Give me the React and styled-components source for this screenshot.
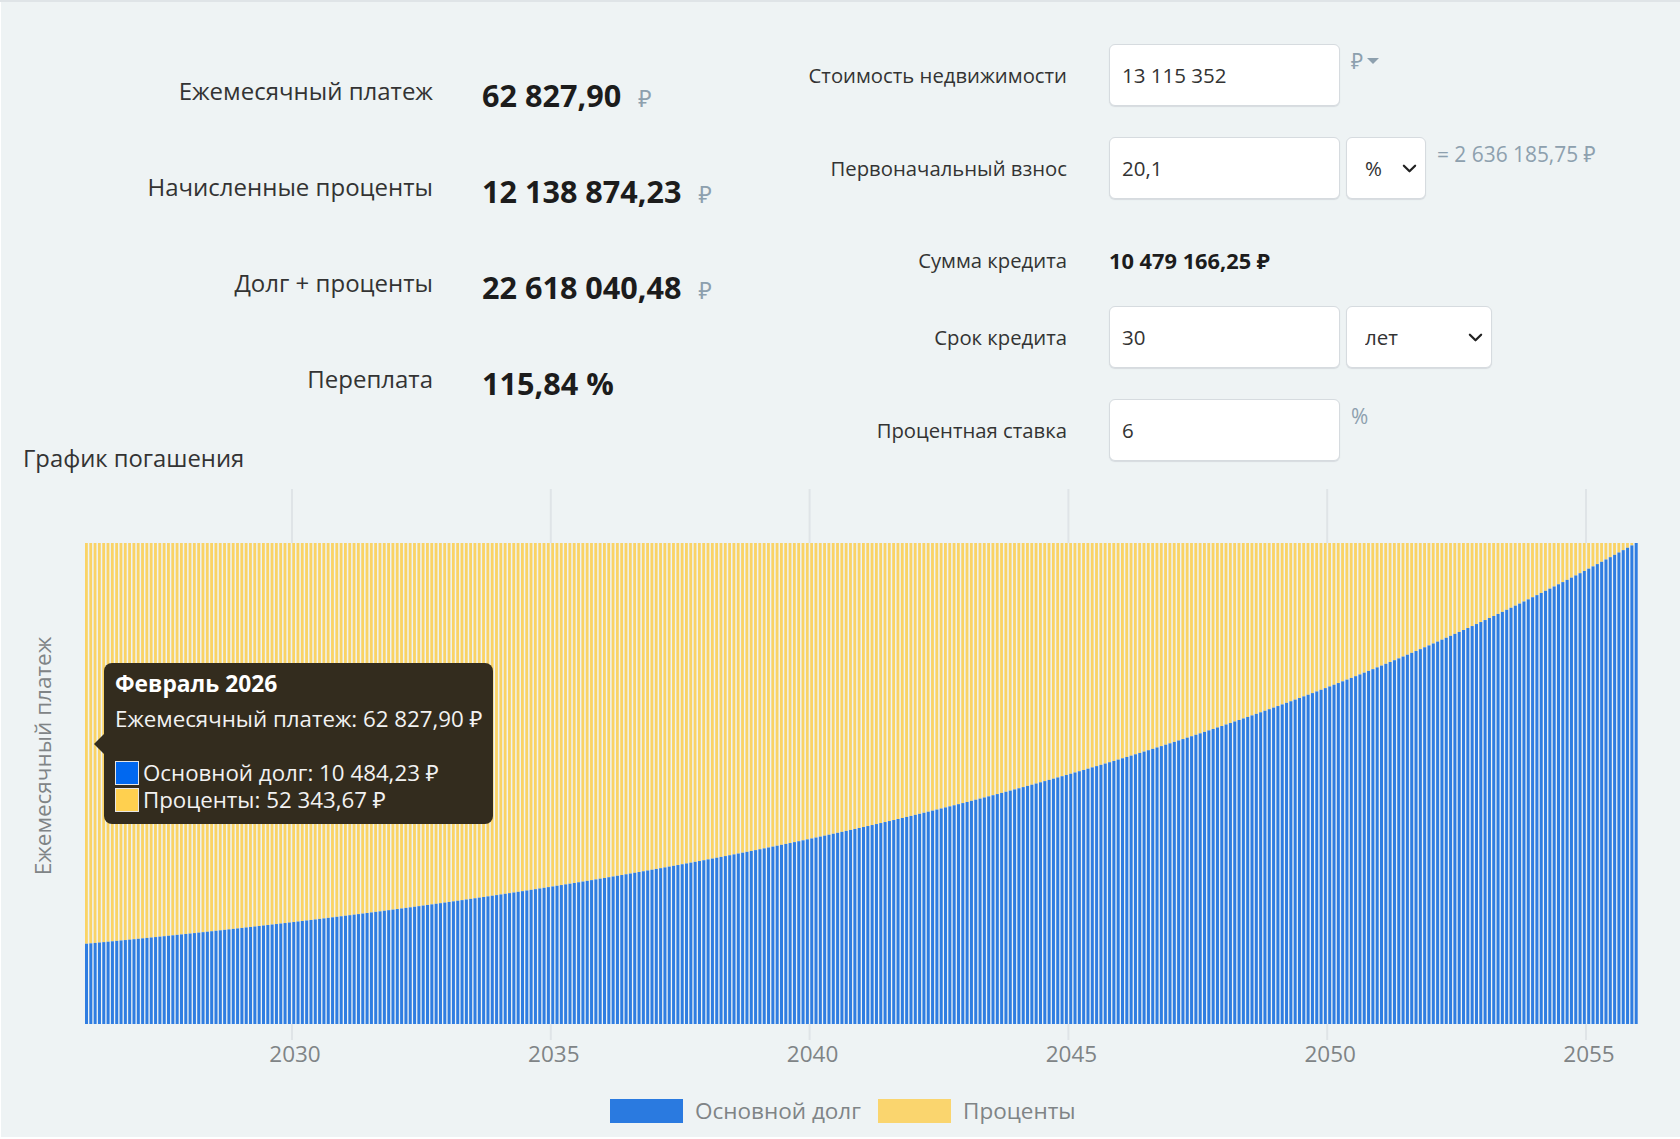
import React from "react";
import styled, { createGlobalStyle } from "styled-components";

const FONT = `"Open Sans", "Noto Sans", "DejaVu Sans", sans-serif`;
const CHEVRON =
  "url(\"data:image/svg+xml,%3csvg xmlns='http://www.w3.org/2000/svg' viewBox='0 0 16 16'%3e%3cpath fill='none' stroke='%23222' stroke-linecap='round' stroke-linejoin='round' stroke-width='2.4' d='M2 5l6 6 6-6'/%3e%3c/svg%3e\")";

const stats = [
  { label: "Ежемесячный платеж", value: "62 827,90", unit: "₽" },
  { label: "Начисленные проценты", value: "12 138 874,23", unit: "₽" },
  { label: "Долг + проценты", value: "22 618 040,48", unit: "₽" },
  { label: "Переплата", value: "115,84 %" },
];

// chart geometry, relative to the chart block
const PLOT = { left: 85, right: 1639, top: 70, bottom: 551 };
const TICKS = [
  { year: 2030, x: 292 },
  { year: 2035, x: 550.8 },
  { year: 2040, x: 809.6 },
  { year: 2045, x: 1068.4 },
  { year: 2050, x: 1327.2 },
  { year: 2055, x: 1586 },
];
const MONTHS = 360;

const Bars = () => {
  const step = (PLOT.right - PLOT.left) / MONTHS;
  const height = PLOT.bottom - PLOT.top;
  const bars = [];
  for (let k = 1; k <= MONTHS; k++) {
    const share = Math.pow(1.005, k - MONTHS);
    const x = PLOT.left + (k - 1) * step;
    const blue = height * share;
    bars.push(
      <g key={k}>
        <rect x={x} y={PLOT.top} width={step - 1.5} height={height - blue} fill="#fad365" />
        <rect x={x} y={PLOT.bottom - blue} width={step - 1.3} height={blue} fill="#2f7de1" />
      </g>
    );
  }
  return <g filter="url(#soft)">{bars}</g>;
};

const Chart = () => (
  <ChartSvg width="1680" height="664">
    <defs>
      <filter id="soft" x="0" y="0" width="100%" height="100%" colorInterpolationFilters="sRGB">
        <feGaussianBlur stdDeviation="0.62 0.3" />
      </filter>
    </defs>
    {TICKS.map((t) => (
      <g key={t.year}>
        <line x1={t.x} x2={t.x} y1={16} y2={PLOT.top} stroke="#dfe4e7" strokeWidth="2" />
        <line x1={t.x} x2={t.x} y1={PLOT.bottom} y2={PLOT.bottom + 16} stroke="#dfe4e7" strokeWidth="2" />
        <AxisText x={t.x + 3} y={PLOT.bottom + 38} textAnchor="middle">
          {t.year}
        </AxisText>
      </g>
    ))}
    <Bars />
    {TICKS.map((t) => (
      <line key={t.year} x1={t.x} x2={t.x} y1={PLOT.top} y2={PLOT.bottom} stroke="#dfe4e7" strokeOpacity="0.12" strokeWidth="2" />
    ))}
    <AxisText x={0} y={0} textAnchor="middle" transform="translate(51 283) rotate(-90)">
      Ежемесячный платеж
    </AxisText>
    <rect x="610" y="626" width="73" height="24" fill="#2a7ae0" />
    <AxisText x="695" y="646">Основной долг</AxisText>
    <rect x="878" y="626" width="73" height="24" fill="#fad56e" />
    <AxisText x="963" y="646">Проценты</AxisText>
  </ChartSvg>
);

const App = () => (
  <Page>
    <GlobalStyle />
    <Top>
      <LeftColumn>
        {stats.map((s) => (
          <StatRow key={s.label}>
            <StatLabel>{s.label}</StatLabel>
            <StatValue>
              {s.value}
              {s.unit && <StatUnit>{s.unit}</StatUnit>}
            </StatValue>
          </StatRow>
        ))}
        <Title>График погашения</Title>
      </LeftColumn>
      <Form>
        <FormRow>
          <FormLabel>Стоимость недвижимости</FormLabel>
          <Input defaultValue="13 115 352" />
          <Hint>₽<Caret /></Hint>
        </FormRow>
        <FormRow>
          <FormLabel>Первоначальный взнос</FormLabel>
          <Input defaultValue="20,1" />
          <Select $width={80} defaultValue="%">
            <option>%</option>
            <option>₽</option>
          </Select>
          <Hint>= 2 636 185,75 ₽</Hint>
        </FormRow>
        <SumRow>
          <FormLabel>Сумма кредита</FormLabel>
          <SumValue>10 479 166,25 ₽</SumValue>
        </SumRow>
        <FormRow>
          <FormLabel>Срок кредита</FormLabel>
          <Input defaultValue="30" />
          <Select $width={146} defaultValue="лет">
            <option>лет</option>
            <option>месяцев</option>
          </Select>
        </FormRow>
        <FormRow>
          <FormLabel>Процентная ставка</FormLabel>
          <Input defaultValue="6" />
          <Hint>%</Hint>
        </FormRow>
      </Form>
    </Top>
    <ChartBlock>
      <Chart />
      <Tooltip>
        <TooltipTitle>Февраль 2026</TooltipTitle>
        <TooltipLine>Ежемесячный платеж: 62 827,90 ₽</TooltipLine>
        <TooltipItem>
          <Swatch $color="#0068f0" />
          Основной долг: 10 484,23 ₽
        </TooltipItem>
        <TooltipItem>
          <Swatch $color="#ffd04f" />
          Проценты: 52 343,67 ₽
        </TooltipItem>
      </Tooltip>
    </ChartBlock>
  </Page>
);

const GlobalStyle = createGlobalStyle`
  html, body { margin: 0; padding: 0; background: #fff; }
  body { font-family: ${FONT}; }
  * { box-sizing: border-box; }
`;

const Page = styled.div`
  width: 1680px;
  height: 1139px;
  background: #eef3f4;
  border-top: 2px solid #dfe4e7;
  border-bottom: 2px solid #fff;
  box-shadow: inset 1px 0 0 #fff;
  overflow: hidden;
`;

const Top = styled.div`
  display: flex;
  height: 471px;
  padding-top: 42px;
`;

const LeftColumn = styled.div`
  width: 790px;
  flex: none;
`;

const StatRow = styled.div`
  display: grid;
  grid-template-columns: 433px 1fr;
  column-gap: 49px;
  align-items: center;
  height: 96px;
`;

const StatLabel = styled.div`
  padding-bottom: 3px;
  text-align: right;
  font-size: 24px;
  color: #333;
`;

const StatValue = styled.div`
  padding-top: 6px;
  font-size: 30.6px;
  font-weight: 700;
  color: #1c1c1c;
  white-space: nowrap;
`;

const StatUnit = styled.span`
  margin-left: 17px;
  font-size: 23px;
  font-weight: 400;
  color: #8da0ae;
`;

const Title = styled.div`
  margin: 15px 0 0 23px;
  font-size: 23.8px;
  line-height: 30px;
  color: #333;
`;

const Form = styled.div`
  display: flex;
  flex-direction: column;
  gap: 31px;
`;

const FormRow = styled.div`
  display: flex;
  align-items: flex-start;
  gap: 6px;
  height: 62px;
`;

const SumRow = styled(FormRow)`
  height: 45px;
  padding-top: 16px;
`;

const FormLabel = styled.div`
  width: 277px;
  margin-right: 36px;
  text-align: right;
  font-size: 20.3px;
  line-height: 62px;
  color: #333;
  ${SumRow} & {
    line-height: 29px;
  }
`;

const Input = styled.input`
  width: 231px;
  height: 62px;
  padding: 0 12px;
  background: #fff;
  border: 1px solid #d6dbdf;
  border-radius: 6px;
  box-shadow: 0 1px 1px #d6dbdf;
  font-family: ${FONT};
  font-size: 20.5px;
  color: #333;
  outline: none;
`;

const Select = styled.select`
  width: ${(p) => p.$width}px;
  height: 62px;
  padding: 0 0 0 18px;
  appearance: none;
  background: #fff ${CHEVRON} no-repeat right 8px center / 15px 15px;
  border: 1px solid #d6dbdf;
  border-radius: 6px;
  box-shadow: 0 1px 1px #d6dbdf;
  font-family: ${FONT};
  font-size: 20.5px;
  color: #333;
  outline: none;
`;

const Hint = styled.div`
  display: flex;
  align-items: center;
  margin: 2px 0 0 5px;
  font-size: 20.9px;
  line-height: 30px;
  color: #8da0ae;
  white-space: nowrap;
`;

const Caret = styled.span`
  margin-left: 4px;
  border-top: 6px solid #8da0ae;
  border-left: 6px solid transparent;
  border-right: 6px solid transparent;
`;

const SumValue = styled.div`
  font-size: 21.8px;
  font-weight: 700;
  line-height: 29px;
  color: #1c1c1c;
`;

const ChartBlock = styled.div`
  position: relative;
  height: 664px;
`;

const ChartSvg = styled.svg`
  display: block;
`;

const AxisText = styled.text`
  font-family: ${FONT};
  font-size: 22.5px;
  fill: #7f8486;
`;

const Tooltip = styled.div`
  position: absolute;
  left: 104px;
  top: 190px;
  width: 389px;
  height: 161px;
  padding: 5px 11px;
  background: #332c1e;
  border-radius: 8px;
  color: #f2f2f2;
  white-space: nowrap;
  &::before {
    content: "";
    position: absolute;
    left: -10px;
    top: 71px;
    border-right: 10px solid #332c1e;
    border-top: 10px solid transparent;
    border-bottom: 10px solid transparent;
  }
`;

const TooltipTitle = styled.div`
  font-size: 22.8px;
  font-weight: 700;
  line-height: 31px;
  color: #fff;
`;

const TooltipLine = styled.div`
  margin: 5px 0 25px;
  font-size: 22.3px;
  line-height: 30px;
`;

const TooltipItem = styled.div`
  display: flex;
  align-items: center;
  gap: 4px;
  height: 27px;
  font-size: 22.3px;
`;

const Swatch = styled.span`
  width: 24px;
  height: 24px;
  background: ${(p) => p.$color};
  border: 1px solid #e6e6e6;
`;

export default App;
